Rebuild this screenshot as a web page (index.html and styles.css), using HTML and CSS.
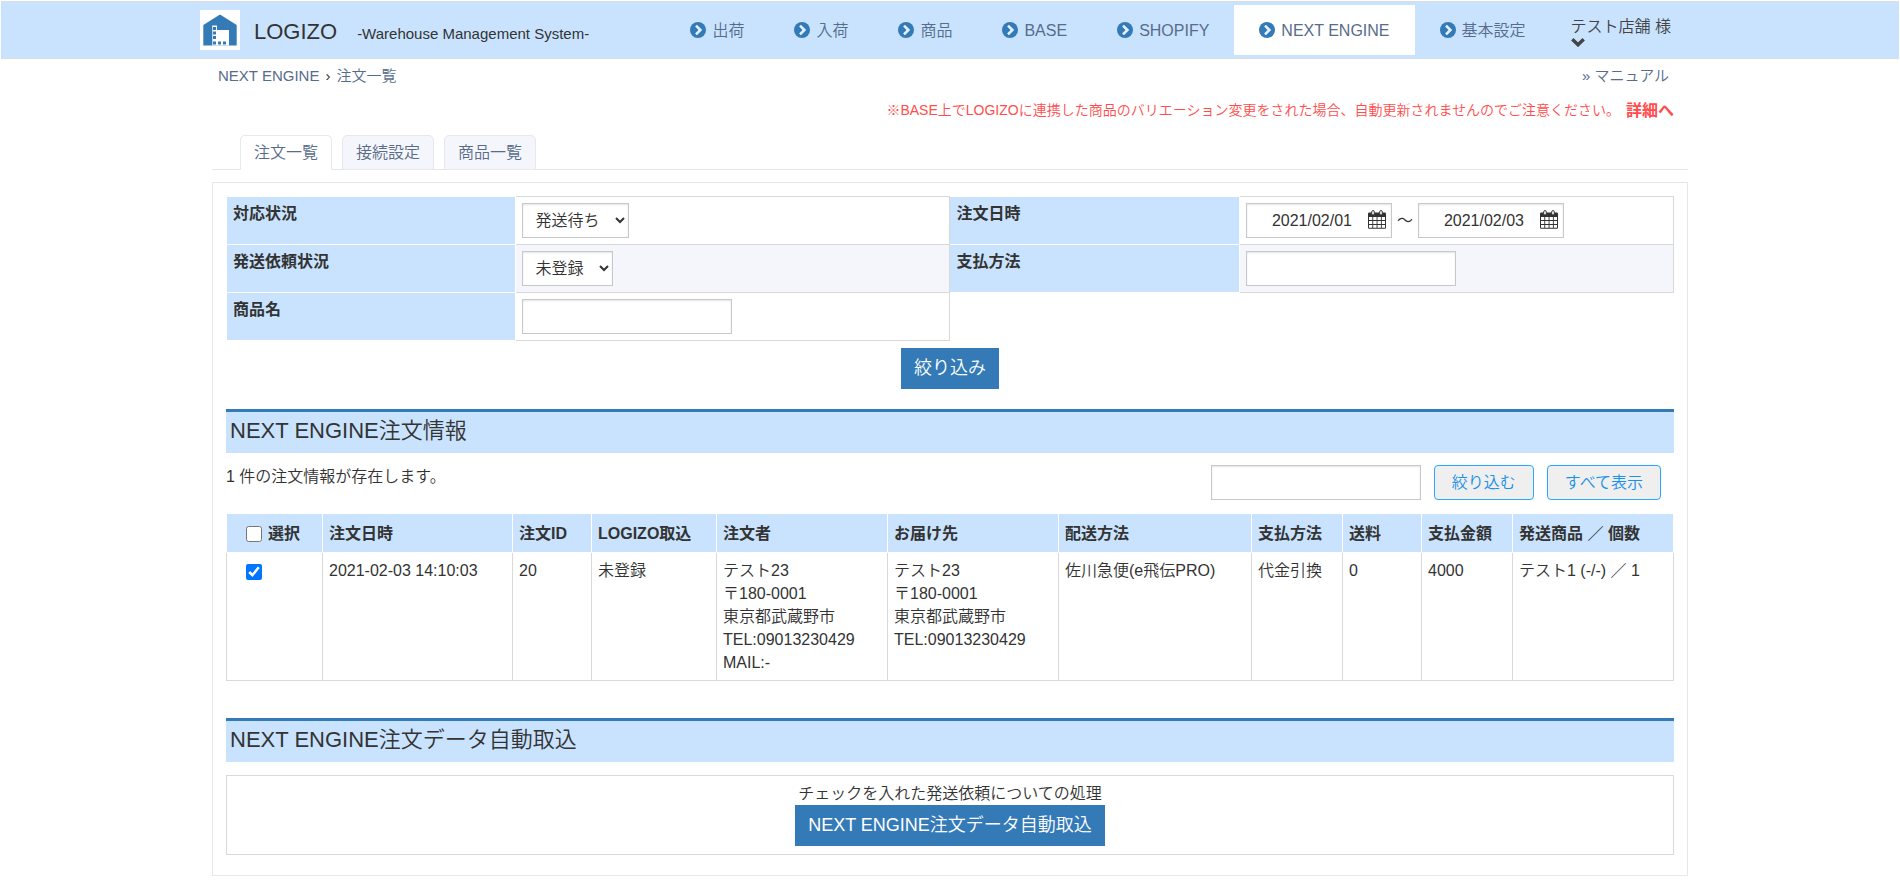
FILE: index.html
```html
<!DOCTYPE html>
<html lang="ja">
<head>
<meta charset="utf-8">
<title>LOGIZO - NEXT ENGINE 注文一覧</title>
<link rel="stylesheet" href="styles.css">
</head>
<body>
<svg class="defs" width="0" height="0" aria-hidden="true">
  <symbol id="go" viewBox="0 0 16 16"><circle cx="8" cy="8" r="8" fill="#337ab7"/><path d="M6 3.6 10.4 8 6 12.4" fill="none" stroke="#e4f1ff" stroke-width="2.6"/></symbol>
  <symbol id="calendar" viewBox="0 0 18 19"><path d="M1.200 2.500h15.600A1.200 1.200 0 0 1 18 3.700v13.800a1.200 1.200 0 0 1-1.200 1.200H1.200A1.200 1.200 0 0 1 0 17.500V3.700A1.200 1.200 0 0 1 1.200 2.500z" fill="#333"/><path d="M1 7h3.300v3H1zM5.200 7h3.400v3H5.200zM9.500 7h3.400v3H9.500zM13.800 7H17v3h-3.200zM1 10.900h3.300v3.100H1zM5.200 10.900h3.400v3.100H5.200zM9.500 10.900h3.400v3.100H9.500zM13.800 10.900H17v3.100h-3.200zM1 14.900h3.300v2.800H1zM5.200 14.900h3.400v2.800H5.200zM9.500 14.900h3.400v2.800H9.500zM13.800 14.900H17v2.800h-3.200z" fill="#fff"/><rect x="3.700" y=".6" width="2.600" height="4.400" rx="1.200" fill="#fff" stroke="#333"/><rect x="11.700" y=".6" width="2.600" height="4.400" rx="1.200" fill="#fff" stroke="#333"/></symbol>
</svg>
<header class="header">
  <div class="header-inner">
    <a class="brand" href="#">
      <svg class="logo" viewBox="0 0 40 40" aria-hidden="true"><path d="M0 0h40v40H0z" fill="#fff"/><path d="M20 4.500 36.700 15v20.500H3.300V15z" fill="#337ab7"/><path d="M12.300 15.500h4.700v4.500h12v15.500H12.300z" fill="#fff"/><path d="M13 17h3v3h-3zM13 21.500h3v3h-3zM13 26h3v3h-3zM13 31.500h3v3h-3zM18 31.500h3v3h-3zM23 31.500h3v3h-3z" fill="#337ab7"/></svg>
      <span class="brand-text">
        <span class="brand-name">LOGIZO</span>
        <span class="brand-tag">-Warehouse Management System-</span>
      </span>
    </a>
    <nav class="nav">
      <a href="#"><svg class="go"><use href="#go"/></svg>出荷</a>
      <a href="#"><svg class="go"><use href="#go"/></svg>入荷</a>
      <a href="#"><svg class="go"><use href="#go"/></svg>商品</a>
      <a href="#"><svg class="go"><use href="#go"/></svg>BASE</a>
      <a href="#"><svg class="go"><use href="#go"/></svg>SHOPIFY</a>
      <a class="active" href="#"><svg class="go"><use href="#go"/></svg>NEXT ENGINE</a>
      <a href="#"><svg class="go"><use href="#go"/></svg>基本設定</a>
    </nav>
    <button class="user" type="button">テスト店舗 様<svg class="user-arrow" viewBox="0 0 14 9" aria-hidden="true"><path d="M1.300 1.300 7 6.800l5.700-5.500" fill="none" stroke="#444" stroke-width="3.400"/></svg></button>
  </div>
</header>
<main class="page">
  <div class="crumbs">
    <div class="trail"><a href="#">NEXT ENGINE</a><span>›</span><a href="#">注文一覧</a></div>
    <a href="#">» マニュアル</a>
  </div>
  <p class="notice">※BASE上でLOGIZOに連携した商品のバリエーション変更をされた場合、自動更新されませんのでご注意ください。<a href="#">詳細へ</a></p>
  <nav class="tabs">
    <a class="current" href="#">注文一覧</a>
    <a href="#">接続設定</a>
    <a href="#">商品一覧</a>
  </nav>
  <div class="panel">
    <form class="filter">
      <table class="filter-table">
        <tr>
          <th><label for="status">対応状況</label></th>
          <td><select id="status"><option>発送待ち</option></select></td>
          <th><label for="from">注文日時</label></th>
          <td><div class="range">
            <span class="date"><input id="from" type="text" value="2021/02/01"><svg><use href="#calendar"/></svg></span>
            <span>～</span>
            <span class="date"><input type="text" value="2021/02/03" aria-label="注文日時（終了）"><svg><use href="#calendar"/></svg></span>
          </div></td>
        </tr>
        <tr class="alt">
          <th><label for="request">発送依頼状況</label></th>
          <td><select id="request"><option>未登録</option></select></td>
          <th><label for="payment">支払方法</label></th>
          <td><input id="payment" type="text"></td>
        </tr>
        <tr>
          <th><label for="product">商品名</label></th>
          <td><input id="product" type="text"></td>
        </tr>
      </table>
      <button class="primary" type="button">絞り込み</button>
    </form>

    <h2>NEXT ENGINE注文情報</h2>
    <div class="toolbar">
      <p>1 件の注文情報が存在します。</p>
      <div class="search">
        <input type="text" aria-label="キーワード">
        <button type="button">絞り込む</button>
        <button type="button">すべて表示</button>
      </div>
    </div>
    <table class="orders">
      <colgroup><col class="c-check"><col class="c-date"><col class="c-small"><col class="c-import"><col class="c-person"><col class="c-person"><col class="c-ship"><col class="c-pay"><col class="c-small"><col class="c-pay"><col></colgroup>
      <thead>
        <tr>
          <th class="check"><label><input type="checkbox">選択</label></th>
          <th>注文日時</th><th>注文ID</th><th>LOGIZO取込</th><th>注文者</th><th>お届け先</th><th>配送方法</th><th>支払方法</th><th>送料</th><th>支払金額</th><th>発送商品 ／ 個数</th>
        </tr>
      </thead>
      <tbody>
        <tr>
          <td class="check"><label><input type="checkbox" checked aria-label="注文20を選択"></label></td>
          <td>2021-02-03 14:10:03</td>
          <td>20</td>
          <td>未登録</td>
          <td>テスト23<br>〒180-0001<br>東京都武蔵野市<br>TEL:09013230429<br>MAIL:-</td>
          <td>テスト23<br>〒180-0001<br>東京都武蔵野市<br>TEL:09013230429</td>
          <td>佐川急便(e飛伝PRO)</td>
          <td>代金引換</td>
          <td>0</td>
          <td>4000</td>
          <td>テスト1 (-/-) ／ 1</td>
        </tr>
      </tbody>
    </table>

    <h2>NEXT ENGINE注文データ自動取込</h2>
    <div class="action">
      <p>チェックを入れた発送依頼についての処理</p>
      <button class="primary" type="button">NEXT ENGINE注文データ自動取込</button>
    </div>
  </div>
</main>
</body>
</html>
```
FILE: styles.css
```css
* { box-sizing: border-box; }
body {
  margin: 0;
  background: #fff;
  color: #333;
  font: 350 16px/23px "Liberation Sans", "Noto Sans CJK JP", sans-serif;
}
p, h2 { margin: 0; font-weight: 350; }
a { color: #576c8a; text-decoration: none; }
button, input, select { font: inherit; color: inherit; }
.defs { display: block; }

.header {
  margin: 1px 1px 0;
  border: solid #d9dde3;
  border-width: 1px 0;
  background: #c9e3ff;
}
.header-inner {
  display: flex;
  align-items: center;
  max-width: 1500px;
  height: 56px;
  margin: 0 auto;
}
.brand { display: flex; align-items: center; gap: 14px; color: #333; }
.brand-text { display: flex; align-items: baseline; gap: 20px; padding-top: 4px; }
.logo { width: 40px; height: 40px; }
.brand-name { font-size: 22px; }
.brand-tag { font-size: 15px; }
.nav { display: flex; margin-left: auto; }
.nav a {
  display: flex;
  align-items: center;
  gap: 6px;
  height: 50px;
  padding: 0 25px;
}
.nav .active { background: #fff; }
.go { width: 16px; height: 16px; }
.user {
  display: flex;
  flex-direction: column;
  align-items: flex-start;
  margin: 0 29px 0 20px;
  padding: 2px 0 0;
  border: 0;
  background: none;
  color: #444;
  line-height: 22px;
}
.user-arrow { width: 14px; height: 9px; }

.page { max-width: 1476px; margin: 0 auto; padding-bottom: 10px; }
.crumbs {
  display: flex;
  justify-content: space-between;
  padding: 5px 19px 0 6px;
  font-size: 15px;
}
.trail { display: flex; gap: 6px; }
.notice {
  display: flex;
  justify-content: flex-end;
  align-items: center;
  gap: 6px;
  margin-top: 12px;
  padding-right: 14px;
  font-size: 14px;
  color: #ff4d4d;
}
.notice a { color: #ff4d4d; font-size: 16px; font-weight: 700; }

.tabs {
  display: flex;
  gap: 10px;
  margin-top: 13px;
  padding-left: 28px;
  border-bottom: 1px solid #e6e6e9;
}
.tabs a {
  margin-bottom: -1px;
  padding: 5px 13px;
  border: 1px solid #e6e8ee;
  border-radius: 5px 5px 0 0;
  background: #f5f6fb;
}
.tabs .current { background: #fff; border-bottom-color: #fff; }

.panel { margin-top: 12px; padding: 13px 13px 20px; border: 1px solid #e6e6ee; }
table { width: 100%; border-collapse: collapse; table-layout: fixed; }
th {
  background: #c9e3ff;
  border: 1px solid #fff;
  text-align: left;
  vertical-align: top;
  font-weight: 700;
}
td { border: 1px solid #d9d9d9; vertical-align: top; }
.filter-table th { width: 20%; padding: 5px 6px; }
.filter-table td { width: 30%; padding: 6px; }
.alt td { background: #f5f6fb; }
input[type="text"], select {
  display: block;
  height: 35px;
  margin: 0;
  border: 1px solid #c8c8c8;
  border-radius: 0;
  background: #fff;
  box-shadow: inset 0 1px 2px #e4e4e4;
}
input[type="text"] { width: 210px; padding: 0 12px; }
select { padding: 0 12px 0 8px; }
.range { display: flex; align-items: center; gap: 5px; }
.date { position: relative; }
.date input[type="text"] { width: 146px; padding: 0 8px 0 25px; }
.date svg { position: absolute; right: 6px; top: 7px; width: 18px; height: 19px; }
.filter { display: flex; flex-direction: column; align-items: center; gap: 7px; }
.primary {
  height: 41px;
  padding: 0 13px;
  border: 0;
  background: #337ab7;
  color: #fff;
  font-size: 18px;
}
h2 {
  margin-top: 20px;
  padding: 5px 4px 8px;
  border-top: 3px solid #337ab7;
  background: #c9e3ff;
  font-size: 22px;
  line-height: 28px;
}
.toolbar { display: flex; justify-content: space-between; padding: 12px 13px 13px 0; }
.search { display: flex; gap: 13px; }
.search button {
  height: 35px;
  padding: 0 17px;
  border: 1px solid #29a8ff;
  border-radius: 4px;
  background: #efefef;
  color: #1990ea;
}
.orders th { padding: 8px 6px 7px; }
.orders td { padding: 6px; }
.orders .check { padding-left: 19px; }
.check label { display: flex; align-items: center; gap: 6px; }
td.check label { padding-top: 5px; }
.check input { width: 16px; height: 16px; margin: 0; }
.c-check { width: 96px; }
.c-date { width: 190px; }
.c-small { width: 79px; }
.c-import { width: 125px; }
.c-person { width: 171px; }
.c-ship { width: 193px; }
.c-pay { width: 91px; }
.orders + h2 { margin-top: 37px; }
.action {
  display: flex;
  flex-direction: column;
  align-items: center;
  margin-top: 13px;
  padding: 6px 6px 8px;
  border: 1px solid #d9d9d9;
}
```
